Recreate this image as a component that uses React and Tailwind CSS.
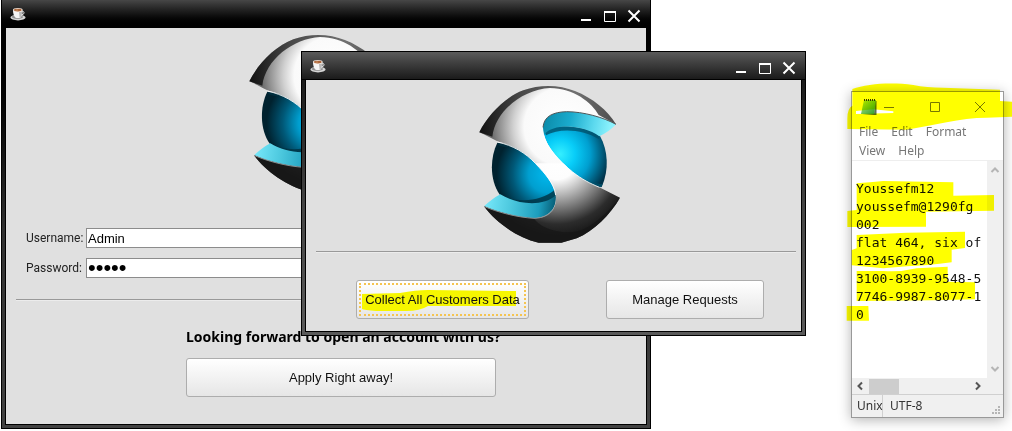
import React from "react";

function CoffeeIcon() {
  return (
    <svg viewBox="0 0 16 14" className="h-3.5 w-4" aria-hidden="true">
      <ellipse cx="8" cy="10.6" rx="7.6" ry="2.8" fill="#d6d6d6" />
      <ellipse cx="7.4" cy="10" rx="5.6" ry="1.7" fill="#8f8f8f" />
      <path d="M3 3.2h9.6c.2 3.6-1 7.4-3.3 7.8H6.6C4.2 10.600 3 6.600 3 3.200z" fill="#f5f5f5" />
      <path d="M9 5l3.200-.8c0 3-1 6-2.600 6.600z" fill="#b9b9b9" />
      <path d="M12.400 4.600c2.400-.4 2.400 2.800-.6 3" fill="none" stroke="#efefef" strokeWidth="1" />
      <ellipse cx="7.800" cy="3" rx="4.800" ry="1.900" fill="#f7ece2" />
      <ellipse cx="7.800" cy="3.100" rx="3.900" ry="1.300" fill="#a9643a" />
      <ellipse cx="6.800" cy="2.900" rx="1.600" ry=".5" fill="#d39a6c" />
    </svg>
  );
}

function Logo({ id }) {
  const body =
    "M58 157C84 104 138 50 190 31C240 12 300 14 345 33C398 54 442 90 468 133C430 112 370 95 320 95C280 96 252 108 249 142C248 190 292 236 338 276C366 298 390 310 418 322L480 353C450 405 402 452 350 475L304 488H236C170 472 108 428 72 379C110 396 170 412 222 415C262 414 288 392 288 356C286 318 258 284 226 250C196 218 160 196 112 184C92 174 76 164 58 157Z";
  return (
    <svg viewBox="0 0 540 510" className="h-[170px] w-[180px]" role="img" aria-label="S logo">
      <defs>
        <radialGradient id={id + "top"} gradientUnits="userSpaceOnUse" cx="310" cy="140" r="235">
          <stop offset="0" stopColor="#fff" />
          <stop offset=".5" stopColor="#fafafa" />
          <stop offset=".64" stopColor="#d0d0d0" />
          <stop offset=".92" stopColor="#6a6a6a" />
        </radialGradient>
        <radialGradient id={id + "bot"} gradientUnits="userSpaceOnUse" cx="290" cy="235" r="235">
          <stop offset="0" stopColor="#fff" />
          <stop offset=".27" stopColor="#fdfdfd" />
          <stop offset=".4" stopColor="#cfcfcf" />
          <stop offset=".6" stopColor="#858585" />
          <stop offset=".84" stopColor="#2c2c2c" />
          <stop offset="1" stopColor="#181818" />
        </radialGradient>
        <linearGradient id={id + "rim"} x1="58" y1="0" x2="468" y2="0" gradientUnits="userSpaceOnUse">
          <stop offset="0" stopColor="#111" />
          <stop offset=".3" stopColor="#484848" />
          <stop offset=".7" stopColor="#707070" />
          <stop offset="1" stopColor="#4c4c4c" />
        </linearGradient>
        <radialGradient id={id + "right"} gradientUnits="userSpaceOnUse" cx="300" cy="222" r="150">
          <stop offset="0" stopColor="#35efff" />
          <stop offset=".3" stopColor="#08cdf8" />
          <stop offset=".6" stopColor="#009fd0" />
          <stop offset="1" stopColor="#003249" />
        </radialGradient>
        <radialGradient id={id + "left"} gradientUnits="userSpaceOnUse" cx="262" cy="282" r="160">
          <stop offset="0" stopColor="#00b9ee" />
          <stop offset=".35" stopColor="#009fd0" />
          <stop offset=".65" stopColor="#005877" />
          <stop offset=".95" stopColor="#00222f" />
        </radialGradient>
        <linearGradient id={id + "lipA"} x1="250" y1="110" x2="450" y2="150" gradientUnits="userSpaceOnUse">
          <stop offset="0" stopColor="#0b8aa8" />
          <stop offset=".4" stopColor="#1aabcd" />
          <stop offset=".75" stopColor="#5cd9ee" />
          <stop offset="1" stopColor="#8cf2fd" />
        </linearGradient>
        <linearGradient id={id + "lipB"} x1="80" y1="360" x2="290" y2="390" gradientUnits="userSpaceOnUse">
          <stop offset="0" stopColor="#74e6f8" />
          <stop offset=".35" stopColor="#4cc8de" />
          <stop offset=".75" stopColor="#1c9dbd" />
          <stop offset="1" stopColor="#04566e" />
        </linearGradient>
        <clipPath id={id + "upper"}>
          <rect width="540" height="262" />
        </clipPath>
        <clipPath id={id + "lower"}>
          <rect y="250" width="540" height="260" />
        </clipPath>
      </defs>
      <path d="M112 188C160 194 200 215 236 252C270 288 290 322 290 350C240 392 160 372 120 345C88 300 90 232 112 188Z" fill={"url(#" + id + "left)"} />
      <path d="M112 188Q140 190 165 201Q135 205 116 196ZM120 345C170 368 240 368 286 328L289 352C250 386 170 378 120 345Z" fill="#003242" opacity=".8" />
      <path d="M249 150C290 130 380 140 420 168C444 210 448 270 425 321L400 317C330 288 262 222 249 150Z" fill={"url(#" + id + "right)"} />
      <path d="M258 166C300 142 370 148 418 178L414 160C360 136 290 132 252 150ZM345 281C375 303 400 310 428 312L424 322L400 318Z" fill="#00516b" opacity=".8" />
      <path d="M468 133C430 110 370 93 320 94C280 96 250 108 248 145L253 163C282 128 370 134 418 169Q448 155 468 133Z" fill={"url(#" + id + "lipA)"} />
      <path d="M72 379Q98 355 121 343C170 374 250 382 287 346C292 388 262 414 222 415C170 414 110 398 72 379Z" fill={"url(#" + id + "lipB)"} />
      <path d={body} fill={"url(#" + id + "top)"} clipPath={"url(#" + id + "upper)"} />
      <path d={body} fill={"url(#" + id + "bot)"} clipPath={"url(#" + id + "lower)"} />
      <path d="M58 157C84 104 138 50 190 31C240 12 300 14 345 33C398 54 442 90 468 133L416 105C396 68 340 24 270 24C190 28 106 92 97 170Z" fill={"url(#" + id + "rim)"} />
      <path d="M72 379C110 396 170 412 222 415C236 440 290 462 340 456C390 450 440 400 480 353C450 405 402 452 350 475L304 488H236C170 472 108 428 72 379Z" fill="#171717" opacity=".75" />
      <path d="M468 133C430 112 370 95 320 95C280 96 252 108 249 142" fill="none" stroke="#4b5558" strokeWidth="3" />
      <path d="M72 379C110 396 170 412 222 415C250 414 270 404 280 388" fill="none" stroke="#8b8f90" strokeWidth="3" />
      <path d="M250 165C262 206 300 246 338 276C366 298 390 310 418 322M112 186C160 197 196 218 226 250C258 284 282 310 287 345" fill="none" stroke="#fff" strokeWidth="3" opacity=".85" />
    </svg>
  );
}

function WindowControls() {
  return (
    <div className="flex items-center gap-2.5 text-white">
      <button type="button" aria-label="Minimize" className="h-3.5 w-3.5">
        <svg viewBox="0 0 14 14" className="h-3.5 w-3.5">
          <path d="M2 11h10" stroke="currentColor" strokeWidth="2" />
        </svg>
      </button>
      <button type="button" aria-label="Maximize" className="h-3.5 w-3.5">
        <svg viewBox="0 0 14 14" className="h-3.5 w-3.5">
          <path d="M1.500 3v9.500h11V3" fill="none" stroke="currentColor" />
          <path d="M1 3h12" stroke="currentColor" strokeWidth="2" />
        </svg>
      </button>
      <button type="button" aria-label="Close" className="h-3.5 w-3.5">
        <svg viewBox="0 0 14 14" className="h-3.5 w-3.5">
          <path d="M1.500 1.500l11 11M12.500 1.500l-11 11" stroke="currentColor" strokeWidth="2" />
        </svg>
      </button>
    </div>
  );
}

function PushButton({ className, children }) {
  return (
    <button
      type="button"
      className={
        "relative h-[39px] rounded-[3px] border border-[#adadad] bg-linear-to-b from-white to-[#e6e6e6] text-[13px] text-[#111] " +
        className
      }
    >
      {children}
    </button>
  );
}

function Rule({ className }) {
  return <hr className={"border-t border-b border-t-[#999] border-b-[#ececec] " + className} />;
}

function LoginWindow() {
  return (
    <section className="absolute top-0 left-px flex h-[429px] w-[650px] flex-col border-x border-b border-black">
      <header className="flex h-7 items-center justify-between border-b border-black bg-linear-to-b from-[#474747] to-black pr-[9px] pl-2">
        <CoffeeIcon />
        <div className="pt-1">
          <WindowControls />
        </div>
      </header>
      <div className="flex grow flex-col bg-linear-to-b from-black via-[#303030] to-[#424242] px-[3px] pb-[3px]">
        <div className="grow border-x border-b border-black bg-[#e0e0e0]">
          <div className="flex justify-center pt-px pr-3">
            <Logo id="a" />
          </div>
          <form className="mt-[29px] flex flex-col gap-2.5 px-5">
            <div className="flex h-5 items-center">
              <label htmlFor="user" className="w-[60px] shrink-0 font-['Roboto'] text-xs text-[#222]">
                Username:
              </label>
              <input id="user" defaultValue="Admin" className="h-5 grow border border-[#8c8c8c] bg-white px-px text-[13px] text-black" />
            </div>
            <div className="flex h-5 items-center">
              <label htmlFor="pass" className="w-[60px] shrink-0 font-['Roboto'] text-xs text-[#222]">
                Password:
              </label>
              <input id="pass" type="password" defaultValue="admin" className="h-5 grow border border-[#8c8c8c] bg-white px-px text-[22px] leading-4 text-black" />
            </div>
          </form>
          <div className="pt-[21px]">
            <Rule className="mx-2.5" />
          </div>
          <div className="mt-[26px] flex flex-col pl-[180px]">
            <p className="font-['Noto_Sans'] text-sm leading-5 font-bold text-black">Looking forward to open an account with us?</p>
            <PushButton className="mt-[11px] w-[310px]">Apply Right away!</PushButton>
          </div>
        </div>
      </div>
    </section>
  );
}

function AdminWindow() {
  return (
    <section className="absolute top-[51px] left-[301px] flex h-[285px] w-[505px] flex-col border border-black">
      <header className="flex h-7 items-center justify-between border-b border-black bg-linear-to-b from-[#5b5b5b] to-[#1b1b1b] pr-[9px] pl-2">
        <CoffeeIcon />
        <div className="pt-1">
          <WindowControls />
        </div>
      </header>
      <div className="flex grow flex-col bg-linear-to-b from-[#1b1b1b] via-[#444] to-[#5a5a5a] px-[3px] pb-[3px]">
        <div className="grow border-x border-b border-black bg-[#e0e0e0]">
          <div className="flex justify-center pr-[7px] pb-px">
            <Logo id="b" />
          </div>
          <Rule className="mr-[5px] ml-2.5" />
          <div className="mt-[27px] flex justify-between pr-[37px] pl-[50px]">
            <PushButton className="w-[173px]">
              <span className="absolute inset-0.5 border-2 border-dotted border-[#f5c451]" />
              <svg viewBox="0 0 156 24" className="absolute top-2 left-[5px] h-6 w-[156px]" aria-hidden="true">
                <path d="M0 5L38 4Q54 1 66 1L154 2V17H66Q58 22 44 22H14Q2 21 0 20Z" fill="#f6f600" />
              </svg>
              <span className="relative whitespace-nowrap">Collect All Customers Data</span>
            </PushButton>
            <PushButton className="w-[158px]">Manage Requests</PushButton>
          </div>
        </div>
      </div>
    </section>
  );
}

function NotepadIcon() {
  return (
    <svg viewBox="0 0 18 18" className="h-[18px] w-[18px]" aria-hidden="true">
      <defs>
        <linearGradient id="pad" x1="0" y1="0" x2="1" y2="1">
          <stop offset="0" stopColor="#b5ec8c" />
          <stop offset="1" stopColor="#2f9a2c" />
        </linearGradient>
      </defs>
      <path d="M15 3h1.500v14H2l12-1z" fill="#56715a" />
      <path d="M4 2h12l-2 14H1z" fill="url(#pad)" />
      <path d="M4 2h12" stroke="#333" strokeWidth="2" strokeDasharray="1 1" />
    </svg>
  );
}

const noteText = [
  "Youssefm12",
  "youssefm@1290fg",
  "002",
  "flat 464, six of",
  "1234567890",
  "3100-8939-9548-5",
  "7746-9987-8077-1",
  "0",
].join("\n");

function Notepad() {
  return (
    <div className="absolute top-[91px] left-[851px] w-[153px]">
      <section className="flex flex-col border border-[#999] bg-white font-['Noto_Sans'] text-xs shadow-[0_2px_12px_rgba(0,0,0,0.3)]">
        <header className="flex h-[30px] items-center pl-2 text-[#777]">
          <NotepadIcon />
          <div className="flex grow items-center justify-between pr-[17px] pl-[5px]">
            <button type="button" aria-label="Minimize note">
              <svg viewBox="0 0 12 12" className="h-3 w-3">
                <path d="M1 6.500h10" stroke="currentColor" />
              </svg>
            </button>
            <button type="button" aria-label="Maximize note">
              <svg viewBox="0 0 12 12" className="h-3 w-3">
                <path d="M1.500 1.500h9v9h-9z" fill="none" stroke="currentColor" />
              </svg>
            </button>
            <button type="button" aria-label="Close note">
              <svg viewBox="0 0 12 12" className="h-3 w-3">
                <path d="M1 1l10 10M11 1L1 11" stroke="currentColor" />
              </svg>
            </button>
          </div>
        </header>
        <nav className="flex flex-wrap gap-x-[13px] border-b border-[#eee] pl-[7px] leading-[19px] text-[#777]">
          <button type="button">File</button>
          <button type="button">Edit</button>
          <button type="button">Format</button>
          <button type="button">View</button>
          <button type="button">Help</button>
        </nav>
        <div className="flex h-[217px]">
          <textarea
            aria-label="Note"
            wrap="off"
            defaultValue={noteText}
            className="min-w-0 grow resize-none overflow-hidden pt-[19px] pl-1 font-['DejaVu_Sans_Mono',monospace] text-[13px] leading-[18px] whitespace-pre text-[#111]"
          />
          <div className="flex w-4 shrink-0 flex-col items-center justify-between bg-[#f0f0f0] py-1 text-[#b5b5b5]">
            <svg viewBox="0 0 10 10" className="h-2.5 w-2.5">
              <path d="M1.500 7L5 3.500 8.500 7" fill="none" stroke="currentColor" strokeWidth="2" />
            </svg>
            <svg viewBox="0 0 10 10" className="h-2.5 w-2.5">
              <path d="M1.500 3L5 6.500 8.500 3" fill="none" stroke="currentColor" strokeWidth="2" />
            </svg>
          </div>
        </div>
        <div className="flex h-4 items-center bg-[#f0f0f0] pr-5 pl-[3px] text-[#555]">
          <svg viewBox="0 0 10 10" className="h-2.5 w-2.5">
            <path d="M7 1.500L3.500 5 7 8.500" fill="none" stroke="currentColor" strokeWidth="2" />
          </svg>
          <span className="ml-1 h-[15px] w-[30px] bg-[#cdcdcd]" />
          <svg viewBox="0 0 10 10" className="ml-auto h-2.5 w-2.5">
            <path d="M3 1.500L6.500 5 3 8.500" fill="none" stroke="currentColor" strokeWidth="2" />
          </svg>
        </div>
        <footer className="flex h-[23px] items-center border-t border-[#d0d0d0] bg-[#f0f0f0] pl-[5px] text-[#333]">
          <span className="w-[26px] border-r border-[#d0d0d0] leading-[22px]">Unix</span>
          <span className="pl-[7px]">UTF-8</span>
          <svg viewBox="0 0 10 10" className="mr-0.5 mb-0.5 ml-auto h-2.5 w-2.5 self-end" fill="#b5b5b5">
            <path d="M7 1h2v2H7zM4 4h2v2H4zM7 4h2v2H7zM1 7h2v2H1zM4 7h2v2H4zM7 7h2v2H7z" />
          </svg>
        </footer>
      </section>
      <svg
        viewBox="0 0 516 1068"
        className="pointer-events-none absolute -top-4 -left-[11px] h-[356px] w-[172px] max-w-none mix-blend-multiply"
        fill="#ff0"
        aria-hidden="true"
      >
        <path d="M37 42C80 27 150 21 220 30Q260 38 310 38L480 44V78L516 80V125L440 128Q380 128 320 142Q260 154 200 164L22 162V130Q22 100 37 92Z" />
        <path d="M48 108L100 103L160 109V114L48 117Z" fill="#fff" />
        <path d="M50 325Q90 322 130 318L340 322V362L462 360V407L258 410V455L22 456V408L50 405Z" />
        <path d="M50 480L200 473L375 470V519L335 524V562Q260 572 200 574L130 580L35 571V525L50 520Z" />
        <path d="M50 588L130 588Q180 592 230 580L323 575V620L405 622V673L280 676L50 678Z" />
        <path d="M20 693H85L87 737H20Z" />
      </svg>
    </div>
  );
}

export default function App() {
  return (
    <main className="relative min-h-screen overflow-hidden bg-white font-['Liberation_Sans',sans-serif]">
      <LoginWindow />
      <AdminWindow />
      <Notepad />
    </main>
  );
}
